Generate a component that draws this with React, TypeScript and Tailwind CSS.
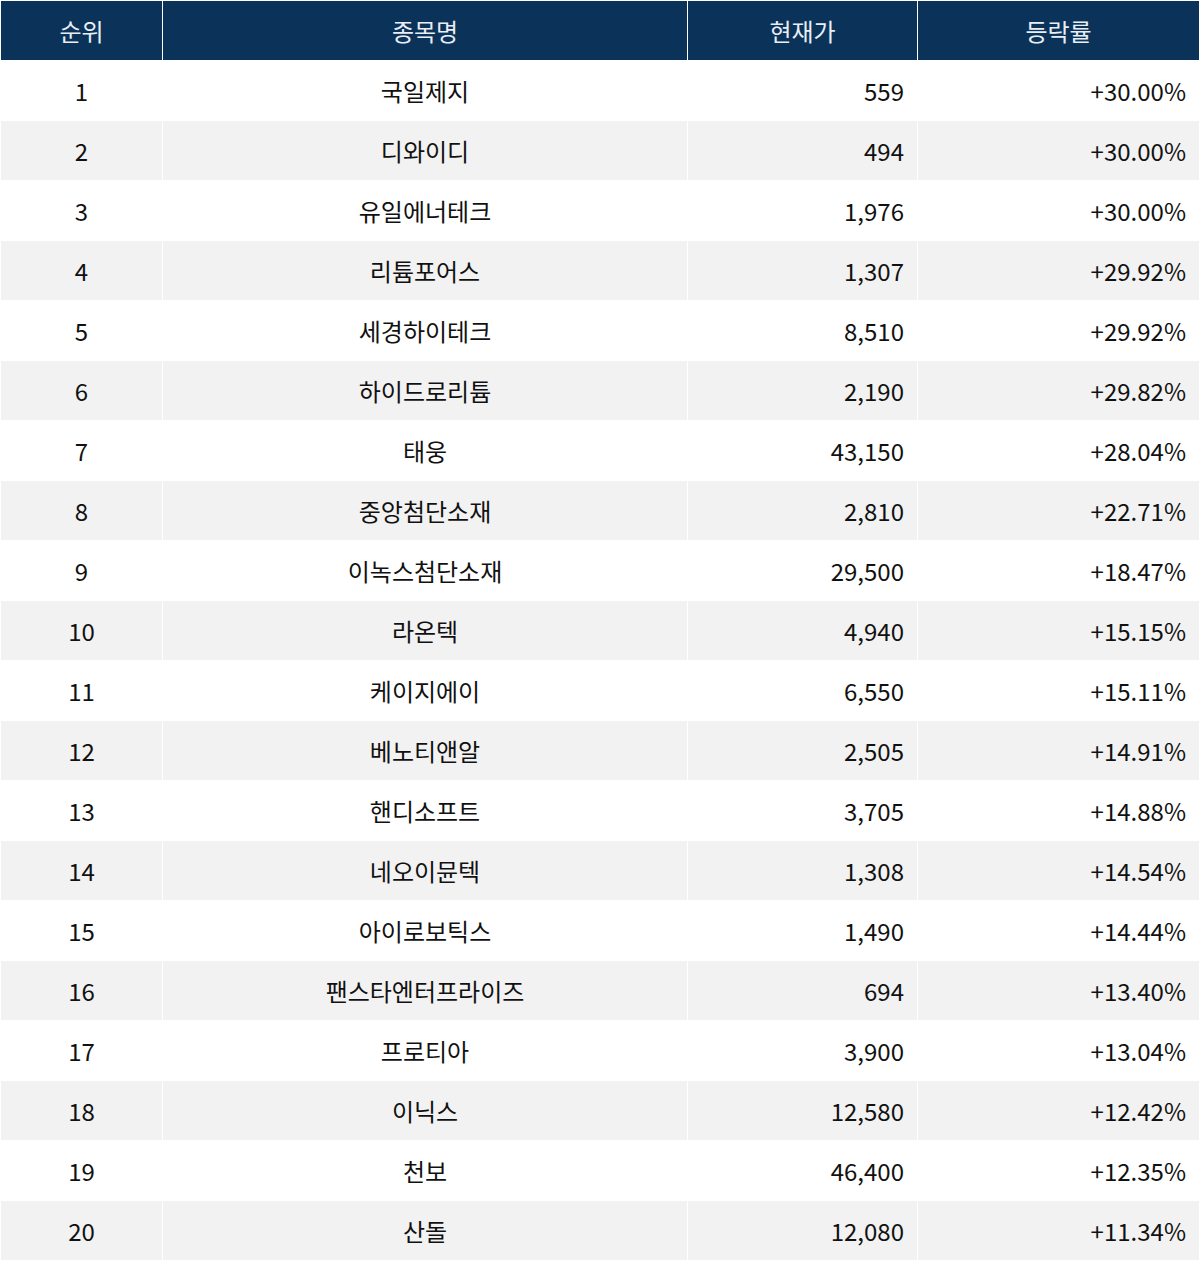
const rows: [string, string, string][] = [
  ['국일제지', '559', '+30.00%'],
  ['디와이디', '494', '+30.00%'],
  ['유일에너테크', '1,976', '+30.00%'],
  ['리튬포어스', '1,307', '+29.92%'],
  ['세경하이테크', '8,510', '+29.92%'],
  ['하이드로리튬', '2,190', '+29.82%'],
  ['태웅', '43,150', '+28.04%'],
  ['중앙첨단소재', '2,810', '+22.71%'],
  ['이녹스첨단소재', '29,500', '+18.47%'],
  ['라온텍', '4,940', '+15.15%'],
  ['케이지에이', '6,550', '+15.11%'],
  ['베노티앤알', '2,505', '+14.91%'],
  ['핸디소프트', '3,705', '+14.88%'],
  ['네오이뮨텍', '1,308', '+14.54%'],
  ['아이로보틱스', '1,490', '+14.44%'],
  ['팬스타엔터프라이즈', '694', '+13.40%'],
  ['프로티아', '3,900', '+13.04%'],
  ['이닉스', '12,580', '+12.42%'],
  ['천보', '46,400', '+12.35%'],
  ['산돌', '12,080', '+11.34%'],
]

const headers = ['순위', '종목명', '현재가', '등락률']

const App = (): JSX.Element => {
  return (
    <div className="w-[1200px] bg-white font-['Noto_Sans_CJK_KR','Noto_Sans',sans-serif] text-[24px]">
      <div className="grid grid-cols-[161px_524px_229px_281px] gap-px p-px">
        {headers.map((h) => (
          <div
            key={h}
            className="h-[59px] flex items-center justify-center bg-[#0b335a] text-[#e8eef4]"
          >
            {h}
          </div>
        ))}
        {rows.map(([name, price, rate], i) => {
          const bg = i % 2 === 0 ? 'bg-white' : 'bg-[#f2f2f2]'
          return [
            <div key={`r${i}`} className={`h-[59px] flex items-center justify-center text-[#111] ${bg}`}>
              {i + 1}
            </div>,
            <div key={`n${i}`} className={`h-[59px] flex items-center justify-center text-[#111] ${bg}`}>
              {name}
            </div>,
            <div key={`p${i}`} className={`h-[59px] flex items-center justify-end pr-[13px] text-[#111] ${bg}`}>
              {price}
            </div>,
            <div key={`c${i}`} className={`h-[59px] flex items-center justify-end pr-[13px] text-[#111] ${bg}`}>
              {rate}
            </div>,
          ]
        })}
      </div>
    </div>
  )
}

export default App
